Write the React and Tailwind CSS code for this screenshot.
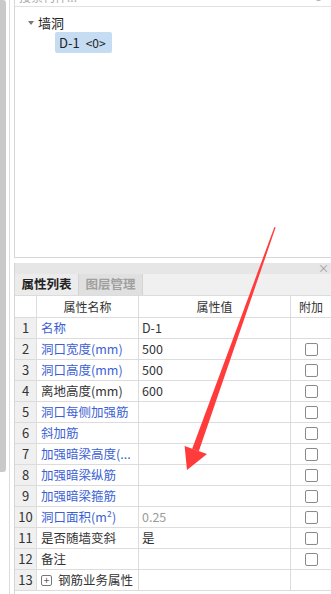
import React from 'react'

const rows = [
  { n: 1, name: '名称', blue: true, value: 'D-1', check: false },
  { n: 2, name: '洞口宽度(mm)', blue: true, value: '500', check: true },
  { n: 3, name: '洞口高度(mm)', blue: true, value: '500', check: true },
  { n: 4, name: '离地高度(mm)', blue: false, value: '600', check: true },
  { n: 5, name: '洞口每侧加强筋', blue: true, value: '', check: true },
  { n: 6, name: '斜加筋', blue: true, value: '', check: true },
  { n: 7, name: '加强暗梁高度(...', blue: true, value: '', check: true },
  { n: 8, name: '加强暗梁纵筋', blue: true, value: '', check: true },
  { n: 9, name: '加强暗梁箍筋', blue: true, value: '', check: true },
  { n: 10, name: '洞口面积(m²)', blue: true, value: '0.25', gray: true, check: true },
  { n: 11, name: '是否随墙变斜', blue: false, value: '是', check: true },
  { n: 12, name: '备注', blue: false, value: '', check: true },
  { n: 13, name: '钢筋业务属性', blue: false, value: '', check: false, group: true },
]

function Checkbox() {
  return <div className="w-[13px] h-[13px] rounded-[2px] border border-[#8a8a8a] bg-white" />
}

export default function App() {
  return (
    <div
      className="relative w-[331px] h-[594px] overflow-hidden bg-white flex text-[12px] text-[#333]"
      style={{ fontFamily: '"Noto Sans CJK SC", "Noto Sans", sans-serif' }}
    >
      {/* left scroll strip */}
      <div className="w-[6px] shrink-0">
        <div className="h-[472px] bg-[#c9c9c9] rounded-r-[3px]" />
      </div>
      <div className="w-[3px] shrink-0" />
      <div className="w-px shrink-0 bg-[#dcdcdc]" />
      <div className="w-[4px] shrink-0" />

      <div className="flex-1 flex flex-col">
        {/* top tree panel */}
        <div className="h-[258px] border-l border-b border-[#d6d6d6] flex flex-col">
          <div className="h-[7px] border-b border-[#e2e2e2] overflow-hidden relative">
            <span className="absolute left-[4px] top-[-11px] text-[12px] leading-[16px] text-[#aaa]">搜索构件...</span>
            <span className="absolute right-[8px] top-[-8px] w-[9px] h-[9px] rounded-full border border-[#999]" />
          </div>
          <div className="flex items-center h-[20px] mt-[6px] pl-[13px]">
            <span className="w-0 h-0 border-l-[3px] border-r-[3px] border-t-[4px] border-l-transparent border-r-transparent border-t-[#777] mr-[4px]" />
            <span className="text-[13px] text-[#222]">墙洞</span>
          </div>
          <div className="pl-[40px] mt-[-1px]">
            <div className="inline-flex items-center h-[21px] w-[57px] pl-[4px] rounded-[2px] bg-[#c5dcf2] text-[13px] text-[#222]">
              D-1 <span className="ml-[6px] text-[12px]">&lt;0&gt;</span>
            </div>
          </div>
        </div>

        <div className="h-[5px]" />

        {/* property panel */}
        <div className="flex-1 border-l border-[#d6d6d6] flex flex-col">
          <div className="h-[11px] bg-[#e6e6e6] flex items-center justify-end pr-[2px]">
            <span className="text-[11px] leading-none text-[#999]">×</span>
          </div>
          <div className="h-[22px] bg-[#f0f0f0] flex border-b border-[#dcdcdc]">
            <div className="w-[64px] flex items-center justify-center bg-[#ececec] border-r border-[#d4d4d4] text-[12.5px] font-bold text-[#222]">
              属性列表
            </div>
            <div className="w-[64px] flex items-center justify-center bg-[#e0e0e0] border-r border-[#d4d4d4] text-[12.5px] font-bold text-[#a0a0a0]">
              图层管理
            </div>
          </div>

          <div className="grid grid-cols-[22px_102px_152px_1fr]">
            <div className="h-[22px] border-r border-b border-[#dcdcdc]" />
            <div className="h-[22px] border-r border-b border-[#dcdcdc] flex items-center justify-center text-[#333]">属性名称</div>
            <div className="h-[22px] border-r border-b border-[#dcdcdc] flex items-center justify-center text-[#333]">属性值</div>
            <div className="h-[22px] border-b border-[#dcdcdc] flex items-center justify-center text-[#333]">附加</div>

            {rows.map((r) => (
              <React.Fragment key={r.n}>
                <div className="h-[21px] bg-[#f0f0f0] border-r border-b border-[#dcdcdc] flex items-center justify-center text-[13px] text-[#333]">
                  {r.n}
                </div>
                <div
                  className={`h-[21px] border-r border-b border-[#dcdcdc] flex items-center pl-[4px] text-[12.5px] whitespace-nowrap overflow-hidden ${
                    r.blue ? 'text-[#3c5fd4]' : 'text-[#333]'
                  }`}
                >
                  {r.group && (
                    <span className="w-[11px] h-[11px] mr-[6px] border border-[#777] rounded-[2px] flex items-center justify-center text-[10px] leading-none text-[#555]">
                      +
                    </span>
                  )}
                  {r.name}
                </div>
                <div
                  className={`h-[21px] border-r border-b border-[#dcdcdc] flex items-center pl-[3px] text-[12.5px] ${
                    r.gray ? 'text-[#9a9a9a]' : 'text-[#333]'
                  }`}
                >
                  {r.value}
                </div>
                <div className="h-[21px] border-b border-[#dcdcdc] flex items-center justify-center">
                  {r.check && <Checkbox />}
                </div>
              </React.Fragment>
            ))}
          </div>
        </div>
      </div>

      {/* red annotation arrow */}
      <svg className="absolute left-0 top-0 pointer-events-none" width="331" height="594" viewBox="0 0 331 594">
        <polygon points="274.4,227 275.6,227.6 198.8,451.2 192.2,448.8" fill="#ff3b3b" />
        <polygon points="184.6,446 207,454 187,470" fill="#ff3b3b" />
      </svg>
    </div>
  )
}
